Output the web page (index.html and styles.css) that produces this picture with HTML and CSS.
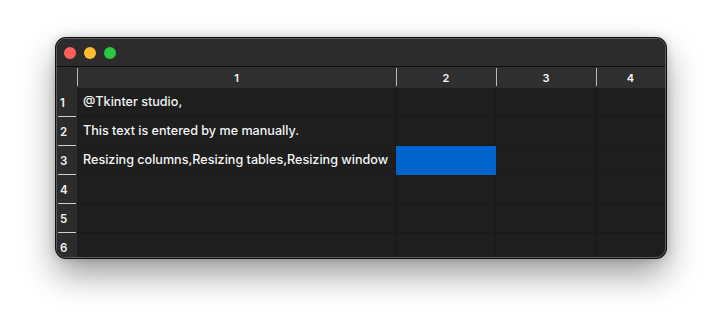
FILE: index.html
```
<!DOCTYPE html>
<html>
<head>
<meta charset="utf-8">
<link rel="stylesheet" href="styles.css">
</head>
<body>
<div class="window">
  <div class="titlebar">
    <span class="light red"></span>
    <span class="light yellow"></span>
    <span class="light green"></span>
  </div>
  <div class="grid">
    <div class="row head">
      <div class="rh"></div>
      <div class="c c1 sep">1</div>
      <div class="c c2 sep">2</div>
      <div class="c c3 sep">3</div>
      <div class="c c4 sep">4</div>
    </div>
    <div class="row">
      <div class="rh">1</div>
      <div class="c c1">@Tkinter studio,</div>
      <div class="c c2"></div>
      <div class="c c3"></div>
      <div class="c c4"></div>
    </div>
    <div class="row">
      <div class="rh">2</div>
      <div class="c c1">This text is entered by me manually.</div>
      <div class="c c2"></div>
      <div class="c c3"></div>
      <div class="c c4"></div>
    </div>
    <div class="row">
      <div class="rh">3</div>
      <div class="c c1">Resizing columns,Resizing tables,Resizing window</div>
      <div class="c c2 selected"></div>
      <div class="c c3"></div>
      <div class="c c4"></div>
    </div>
    <div class="row">
      <div class="rh">4</div>
      <div class="c c1"></div>
      <div class="c c2"></div>
      <div class="c c3"></div>
      <div class="c c4"></div>
    </div>
    <div class="row">
      <div class="rh">5</div>
      <div class="c c1"></div>
      <div class="c c2"></div>
      <div class="c c3"></div>
      <div class="c c4"></div>
    </div>
    <div class="row">
      <div class="rh">6</div>
      <div class="c c1"></div>
      <div class="c c2"></div>
      <div class="c c3"></div>
      <div class="c c4"></div>
    </div>
  </div>
</div>
</body>
</html>
```
FILE: styles.css
```
html, body {
  margin: 0;
  padding: 0;
  background: #ffffff;
  font-family: Inter, "Liberation Sans", Arial, sans-serif;
}
body {
  padding: 38px 0 0 56px;
  min-height: 332px;
  box-sizing: border-box;
}
.window {
  width: 610px;
  height: 220px;
  box-sizing: border-box;
  border: 1px solid #5c5c5c;
  border-radius: 10px;
  background: #1e1e1e;
  overflow: hidden;
  box-shadow: 0 0 0 1px #111, 0 16px 34px rgba(0, 0, 0, 0.4), 0 0 10px rgba(0, 0, 0, 0.22);
}
.titlebar {
  height: 27px;
  background: #2c2c2c;
  border-bottom: 1px solid #0d0d0d;
  display: flex;
  align-items: center;
  gap: 8px;
  padding-left: 7px;
}
.light {
  width: 12px;
  height: 12px;
  border-radius: 50%;
  display: block;
}
.red { background: #fe5f57; }
.yellow { background: #febc2e; }
.green { background: #28c840; }
.grid {
  display: flex;
  flex-direction: column;
}
.row {
  display: flex;
  height: 29px;
}
.row.head {
  height: 21px;
  background: #2f2f2f;
}
.rh {
  width: 20px;
  flex: none;
  background: #2c2c2c;
  color: #f2f2f2;
  font-size: 11.5px;
  font-weight: 600;
  padding-left: 3px;
  box-sizing: border-box;
  display: flex;
  align-items: center;
  position: relative;
}
.row:not(.head) .rh::after {
  content: "";
  position: absolute;
  left: 1px;
  right: 1px;
  bottom: 0;
  height: 1px;
  background: #d0d0d0;
}
.c {
  flex: none;
  box-sizing: border-box;
  border-right: 1px solid #191919;
  border-bottom: 1px solid #191919;
  color: #f4f4f4;
  font-size: 12.6px;
  font-weight: 500;
  padding-left: 6px;
  padding-bottom: 1px;
  display: flex;
  align-items: center;
  white-space: nowrap;
  overflow: hidden;
}
.c1 { width: 319px; }
.c2 { width: 100px; }
.c3 { width: 100px; }
.c4 { flex: 1; border-right: none; }
.head .c {
  border: none;
  justify-content: center;
  padding: 0;
  font-size: 11px;
  font-weight: 600;
  position: relative;
}
.head .sep::before {
  content: "";
  position: absolute;
  left: 0;
  top: 1px;
  bottom: 2px;
  width: 1px;
  background: #b9b9b9;
}
.selected {
  background: #0064cd;
  border-color: #0064cd;
}
```
